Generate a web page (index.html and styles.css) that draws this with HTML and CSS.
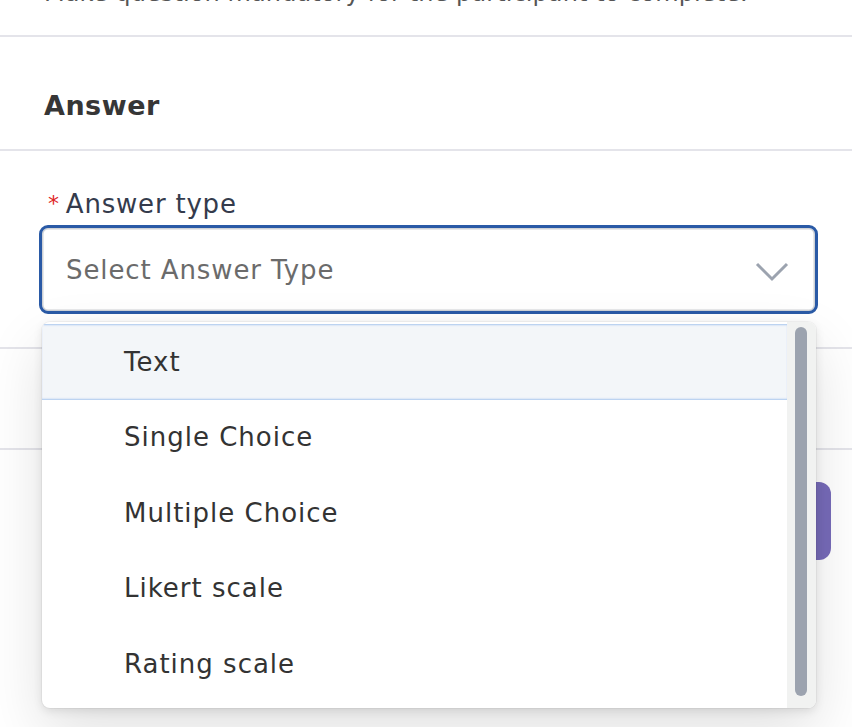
FILE: index.html
```html
<!DOCTYPE html>
<html>
<head>
<meta charset="utf-8">
<link rel="stylesheet" href="styles.css">
</head>
<body>
<div class="page">
  <div class="note-row">
    <p class="note">Make question mandatory for the participant to complete.</p>
  </div>
  <div class="section-head">
    <h2 class="section-title">Answer</h2>
  </div>
  <div class="field-area">
    <div class="field">
      <label class="field-label"><span class="req">*</span>Answer type</label>
      <div class="select">
        <span class="placeholder">Select Answer Type</span>
        <svg class="chev" width="34" height="20" viewBox="0 0 34 20"><path d="M2 2 L17 17 L32 2" fill="none" stroke="#9ca3af" stroke-width="3"/></svg>
      </div>
    </div>
    <div class="below-row"></div>
    <div class="actions-row">
      <button class="primary-btn"></button>
    </div>
    <div class="menu">
      <ul class="options">
        <li class="option active">Text</li>
        <li class="option">Single Choice</li>
        <li class="option">Multiple Choice</li>
        <li class="option">Likert scale</li>
        <li class="option">Rating scale</li>
      </ul>
      <div class="track"><div class="thumb"></div></div>
    </div>
  </div>
</div>
</body>
</html>
```

FILE: styles.css
```css
html, body {
  margin: 0;
  padding: 0;
  background: #ffffff;
}
body {
  font-family: "DejaVu Sans", "Open Sans", sans-serif;
  width: 852px;
  height: 727px;
  overflow: hidden;
}
.page {
  position: relative;
}
.note-row {
  height: 35px;
  border-bottom: 2px solid #e4e4ea;
  overflow: hidden;
}
.note {
  margin: 0;
  padding-left: 44px;
  font-size: 24px;
  line-height: 30px;
  color: #555;
  margin-top: -22px;
  white-space: nowrap;
  letter-spacing: 0.1px;
}
.section-head {
  height: 114px;
  border-bottom: 2px solid #e4e4ea;
  padding-left: 44px;
  box-sizing: border-box;
  display: flex;
  align-items: flex-end;
  padding-bottom: 27px;
}
.section-title {
  margin: 0;
  font-size: 27px;
  font-weight: 600;
  color: #363636;
  line-height: 32px;
  letter-spacing: 0.5px;
}
.field-area {
  position: relative;
}
.field {
  padding: 37px 34px 0 39px;
  height: 198px;
  box-sizing: border-box;
  border-bottom: 2px solid #e4e4ea;
}
.field-label {
  display: block;
  font-size: 26px;
  color: #343b4c;
  line-height: 32px;
  padding-left: 9px;
  letter-spacing: 0.8px;
}
.req {
  color: #e02424;
  font-size: 22px;
  margin-right: 6px;
  vertical-align: 2px;
}
.select {
  margin-top: 5px;
  height: 89px;
  box-sizing: border-box;
  border: 3px solid #2a5aa6;
  border-radius: 9px;
  box-shadow: inset 0 0 0 1.5px #cfd2d6;
  display: flex;
  align-items: center;
  justify-content: space-between;
  padding: 0 26px 0 24px;
}
.placeholder {
  font-size: 26px;
  color: #6b6b6b;
  letter-spacing: 0.9px;
}
.chev {
  display: block;
  margin-top: 4px;
}
.below-row {
  height: 99px;
  border-bottom: 2px solid #e4e4ea;
}
.actions-row {
  display: flex;
  justify-content: flex-end;
  padding: 32px 21px 0 0;
}
.primary-btn {
  width: 90px;
  height: 78px;
  border: none;
  border-radius: 12px;
  background: #776bb9;
}
.menu {
  position: absolute;
  left: 42px;
  top: 171px;
  width: 774px;
  height: 386px;
  background: #fff;
  border-radius: 8px;
  box-shadow: 0 3px 10px rgba(0,0,0,0.10), 0 24px 60px rgba(0,0,0,0.12), 0 0 0 1px rgba(0,0,0,0.04);
  display: flex;
  overflow: hidden;
}
.options {
  list-style: none;
  margin: 0;
  padding: 2px 0 0 0;
  flex: 1;
}
.option {
  height: 75.5px;
  display: flex;
  align-items: center;
  padding-left: 82px;
  font-size: 26px;
  color: #333;
  box-sizing: border-box;
  letter-spacing: 1px;
}
.option.active {
  background: #f3f6f9;
  box-shadow: inset 0 2px 2px -1px #a9c6ee, inset 0 -2px 2px -1px #a9c6ee;
}
.track {
  width: 29px;
  background: #f1f2f1;
  display: flex;
  justify-content: center;
  padding: 5px 0 12px;
  box-sizing: border-box;
}
.thumb {
  width: 12px;
  background: #9ca3af;
  border-radius: 6px;
  margin-left: -2px;
}
```
